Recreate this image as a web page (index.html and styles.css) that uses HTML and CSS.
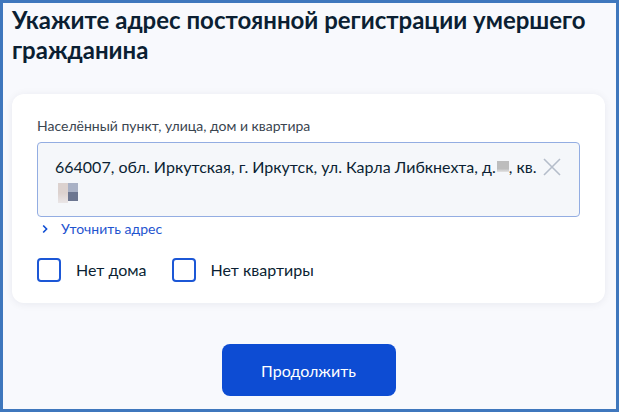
FILE: index.html
```html
<!DOCTYPE html>
<html lang="ru">
<head>
<meta charset="utf-8">
<title>Адрес регистрации</title>
<link rel="stylesheet" href="styles.css">
</head>
<body>
<div class="frame">
  <h1 class="title">Укажите адрес постоянной регистрации умершего гражданина</h1>
  <section class="card">
    <div class="label">Населённый пункт, улица, дом и квартира</div>
    <div class="input">
      <div class="input-text">664007, обл. Иркутская, г. Иркутск, ул. Карла Либкнехта, д.<span class="blur-a"></span>, кв.<br><span class="blur-b"><span class="bl-l"></span><span class="bl-r"><span class="bl-rt"></span><span class="bl-rb"></span></span></span></div>
      <svg class="clear" width="18" height="18" viewBox="0 0 18 18"><path d="M1 1L17 17M17 1L1 17" stroke="#b5bdca" stroke-width="1.6" fill="none"/></svg>
    </div>
    <div class="refine">
      <svg class="chev" width="6" height="10" viewBox="0 0 6 10"><path d="M1.2 1.5L4.6 5L1.2 8.5" stroke="#0d4cd3" stroke-width="1.6" fill="none"/></svg>
      <span class="refine-text">Уточнить адрес</span>
    </div>
    <div class="checks">
      <label class="check"><span class="box"></span><span class="check-text">Нет дома</span></label>
      <label class="check"><span class="box"></span><span class="check-text">Нет квартиры</span></label>
    </div>
  </section>
  <div class="actions">
    <button class="btn">Продолжить</button>
  </div>
</div>
</body>
</html>
```
FILE: styles.css
```css
* { box-sizing: border-box; }
html, body { margin: 0; padding: 0; }
body {
  font-family: Lato, "Noto Sans", sans-serif;
  color: #0b1f33;
  background: #f8f9fd;
}
.frame {
  width: 619px;
  height: 412px;
  border: 3px solid #3f77bd;
  background: #f8f9fd;
  padding: 2px 11px 0 9px;
  overflow: hidden;
}
.title {
  margin: 0;
  font-size: 24px;
  line-height: 30px;
  font-weight: 700;
  color: #0b1f33;
}
.card {
  margin-top: 29px;
  background: #fff;
  border-radius: 12px;
  box-shadow: 0 1px 8px rgba(11, 31, 51, 0.07);
  padding: 24px 25px 21px 25px;
}
.label {
  font-size: 14px;
  line-height: 16px;
  color: #3a4550;
}
.input {
  margin-top: 8px;
  display: flex;
  align-items: flex-start;
  border: 1px solid #93ade2;
  border-radius: 4px;
  background: #f5f7fa;
  padding: 12px 18px 13px 17px;
}
.input-text {
  flex: 1;
  font-size: 16px;
  line-height: 24px;
  color: #0b1f33;
}
.blur-a {
  display: inline-block;
  width: 12px;
  height: 11px;
  background: linear-gradient(#bdbdbd 0 70%, #e4e4e4 100%);
  vertical-align: 1px;
  margin-left: 1px;
}
.blur-b {
  display: inline-flex;
  width: 20px;
  height: 20px;
  vertical-align: -6px;
  margin-left: 3px;
}
.bl-l {
  width: 10px;
  background: linear-gradient(#dcd2cf 0 50%, #eae6e7 100%);
}
.bl-r {
  width: 10px;
  display: flex;
  flex-direction: column;
}
.bl-rt { height: 9px; background: #a9b1c5; }
.bl-rb { height: 9px; background: #6c7690; }
.clear {
  margin-top: 3px;
  margin-left: 6px;
  flex: none;
}
.refine {
  margin-top: 4px;
  padding-left: 5px;
  display: flex;
  align-items: center;
  gap: 13px;
  color: #1f55cf;
  font-size: 14px;
  line-height: 16px;
}
.checks {
  margin-top: 21px;
  display: flex;
  gap: 25px;
}
.check {
  display: flex;
  align-items: center;
  gap: 15px;
  font-size: 16px;
  line-height: 24px;
  color: #0b1f33;
}
.box {
  width: 24px;
  height: 24px;
  border: 2px solid #1c57d6;
  border-radius: 4px;
  background: #fff;
}
.actions {
  display: flex;
  justify-content: center;
  margin-top: 41px;
}
.btn {
  width: 174px;
  height: 52px;
  border: 0;
  border-radius: 8px;
  background: #0d4cd3;
  color: #fff;
  font-family: Lato, "Noto Sans", sans-serif;
  font-size: 16px;
}
```
